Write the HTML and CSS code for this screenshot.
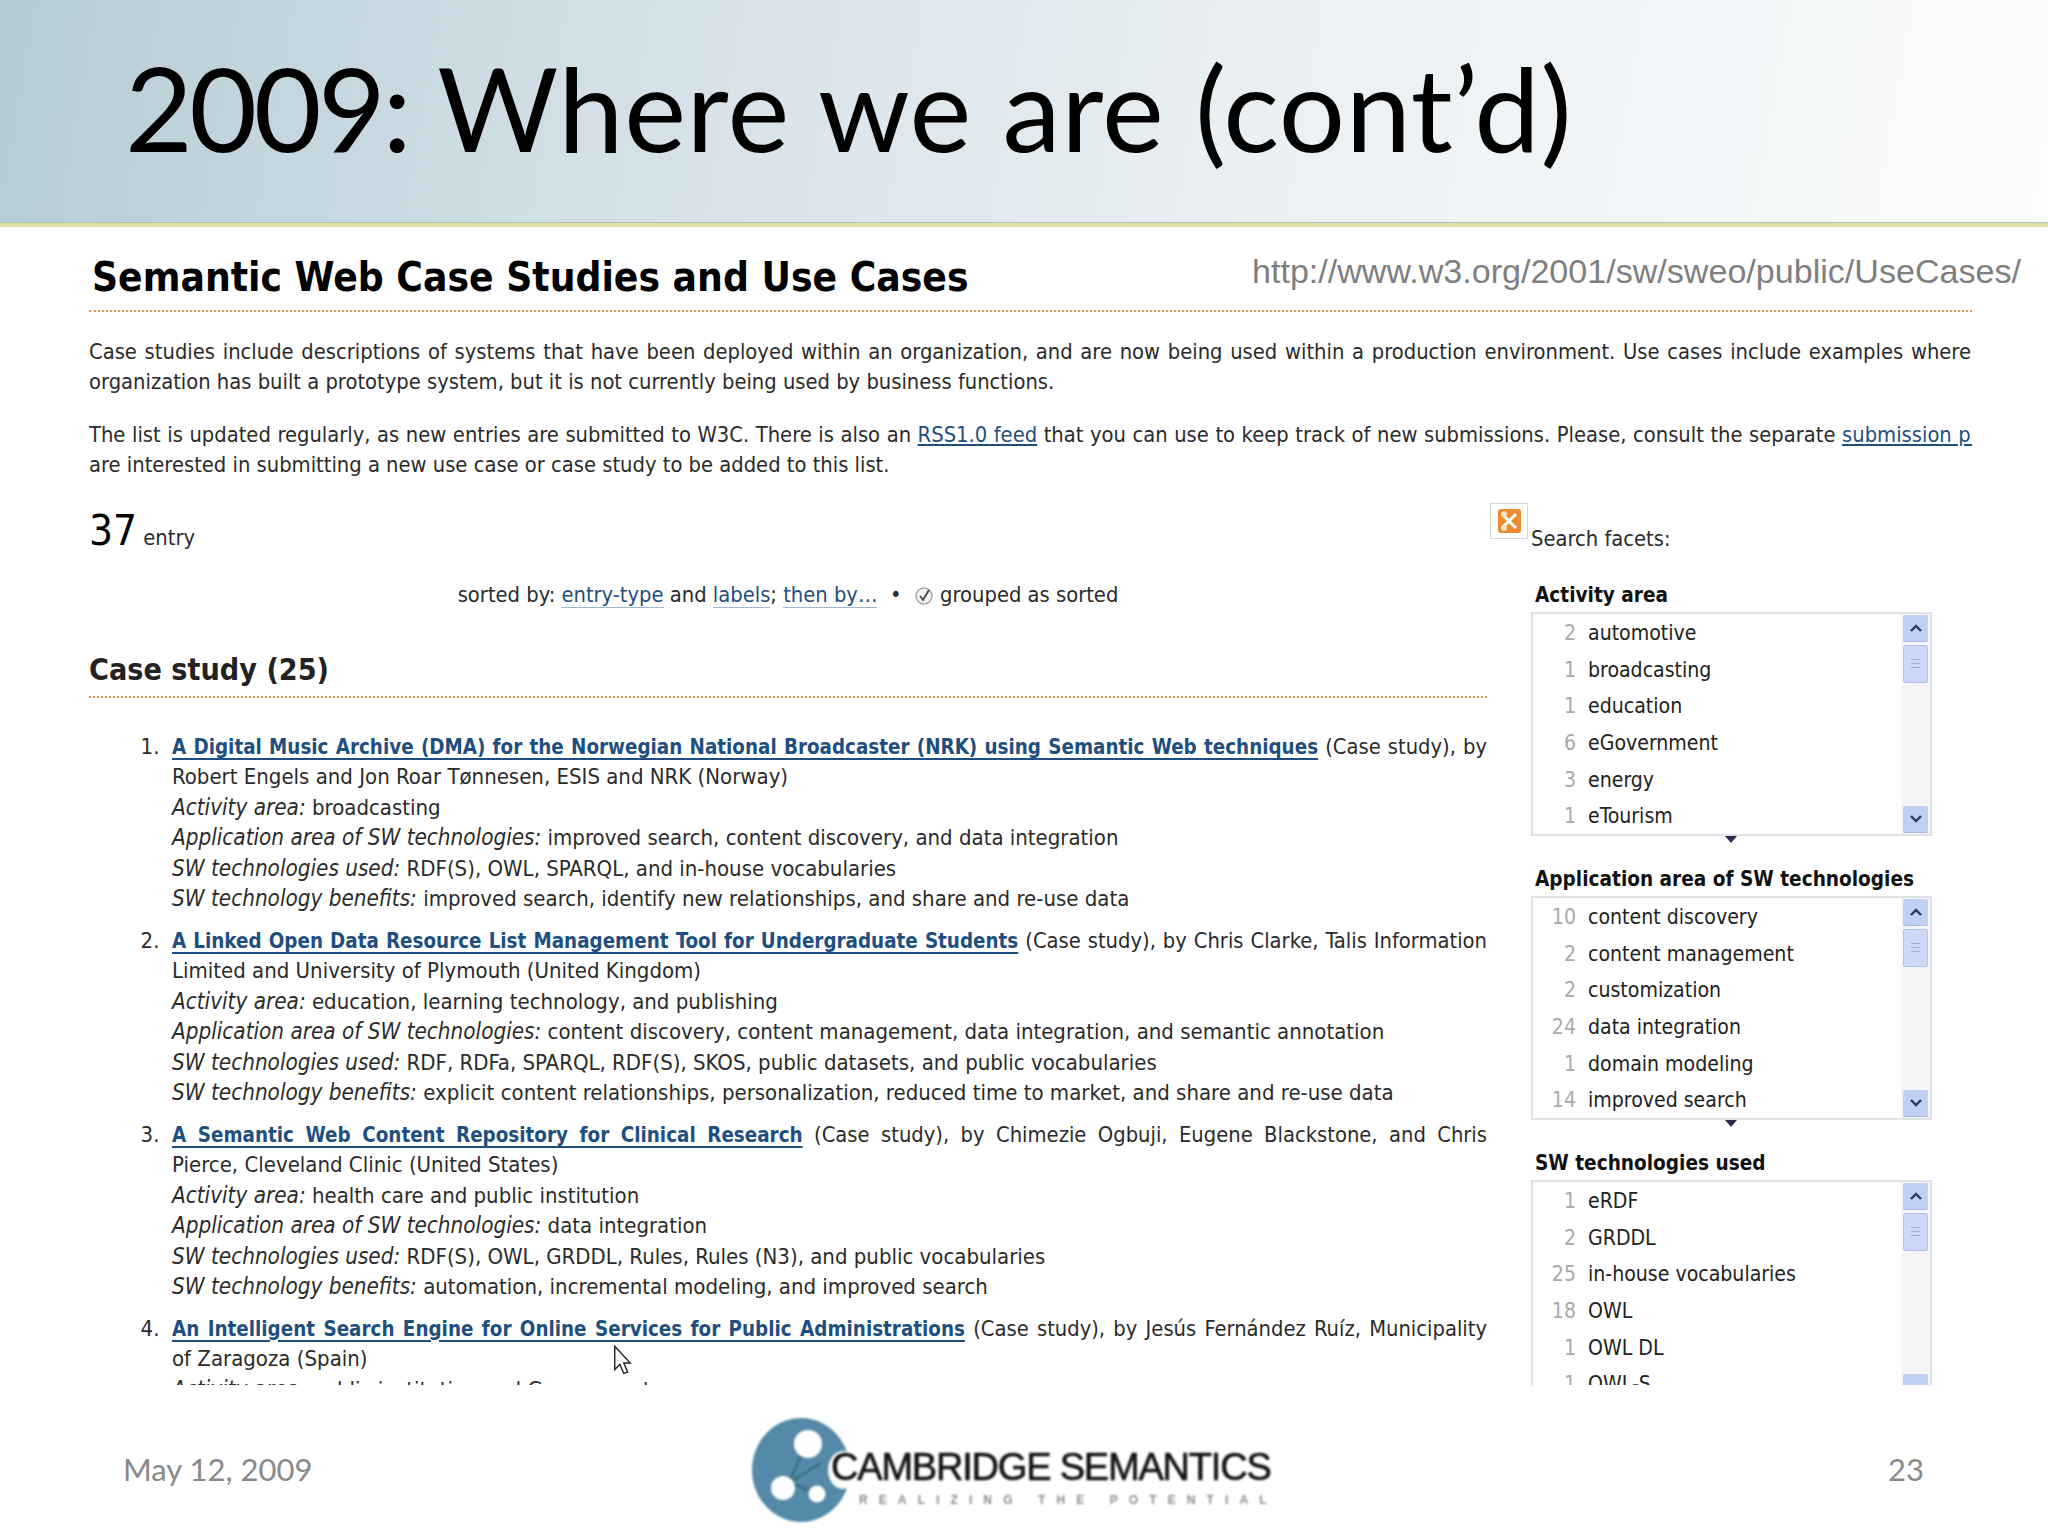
FILE: index.html
```html
<!DOCTYPE html>
<html lang="en">
<head>
<meta charset="utf-8">
<title>2009: Where we are (cont'd)</title>
<link rel="stylesheet" href="styles.css">
</head>
<body>
<div class="slide">
  <header class="title-bar"><h1 class="slide-title"><span class="title-year">2009:</span> Where we are (cont’d)</h1></header>
  <main class="page">
    <div class="url">http://www.w3.org/2001/sw/sweo/public/UseCases/</div>
    <h2 class="page-title">Semantic Web Case Studies and Use Cases</h2>
    <p class="intro intro-wide">Case studies include descriptions of systems that have been deployed within an organization, and are now being used within a production environment. Use cases include examples where an<br>organization has built a prototype system, but it is not currently being used by business functions.</p>
    <p class="intro">The list is updated regularly, as new entries are submitted to W3C. There is also an <a href="#">RSS1.0 feed</a> that you can use to keep track of new submissions. Please, consult the separate <a href="#">submission page</a> if you<br>are interested in submitting a new use case or case study to be added to this list.</p>
    <div class="columns">
      <section class="results">
        <div class="count"><span class="count-num">37</span> entry</div>
        <div class="sort">sorted by: <a class="soft" href="#">entry-type</a> and <a class="soft" href="#">labels</a>; <a class="soft" href="#">then by…</a> &nbsp;•&nbsp;
          <svg class="check" viewBox="0 0 20 20" width="20" height="20"><circle cx="10" cy="10" r="8" fill="#f2f2f2" stroke="#a8a8a8" stroke-width="1.5"/><path d="M6 10l3 4 6-10" fill="none" stroke="#444" stroke-width="1.8"/></svg>
          grouped as sorted</div>
        <h3 class="group">Case study (25)</h3>
        <ol class="items">
          <li>
            <div class="lead"><a class="item-link" href="#">A Digital Music Archive (DMA) for the Norwegian National Broadcaster (NRK) using Semantic Web techniques</a> (Case study), by</div>
            <div>Robert Engels and Jon Roar Tønnesen, ESIS and NRK (Norway)</div>
            <div><em>Activity area:</em> broadcasting</div>
            <div><em>Application area of SW technologies:</em> improved search, content discovery, and data integration</div>
            <div><em>SW technologies used:</em> RDF(S), OWL, SPARQL, and in-house vocabularies</div>
            <div><em>SW technology benefits:</em> improved search, identify new relationships, and share and re-use data</div>
          </li>
          <li>
            <div class="lead"><a class="item-link" href="#">A Linked Open Data Resource List Management Tool for Undergraduate Students</a> (Case study), by Chris Clarke, Talis Information</div>
            <div>Limited and University of Plymouth (United Kingdom)</div>
            <div><em>Activity area:</em> education, learning technology, and publishing</div>
            <div><em>Application area of SW technologies:</em> content discovery, content management, data integration, and semantic annotation</div>
            <div><em>SW technologies used:</em> RDF, RDFa, SPARQL, RDF(S), SKOS, public datasets, and public vocabularies</div>
            <div><em>SW technology benefits:</em> explicit content relationships, personalization, reduced time to market, and share and re-use data</div>
          </li>
          <li>
            <div class="lead"><a class="item-link" href="#">A Semantic Web Content Repository for Clinical Research</a> (Case study), by Chimezie Ogbuji, Eugene Blackstone, and Chris</div>
            <div>Pierce, Cleveland Clinic (United States)</div>
            <div><em>Activity area:</em> health care and public institution</div>
            <div><em>Application area of SW technologies:</em> data integration</div>
            <div><em>SW technologies used:</em> RDF(S), OWL, GRDDL, Rules, Rules (N3), and public vocabularies</div>
            <div><em>SW technology benefits:</em> automation, incremental modeling, and improved search</div>
          </li>
          <li>
            <div class="lead"><a class="item-link" href="#">An Intelligent Search Engine for Online Services for Public Administrations</a> (Case study), by Jesús Fernández Ruíz, Municipality</div>
            <div>of Zaragoza (Spain)</div>
            <div><em>Activity area:</em> public institution and Government</div>
          </li>
        </ol>
      </section>
      <aside class="facets">
        <div class="facet-head">
          <svg class="tool-icon" viewBox="0 0 38 36" width="38" height="36"><rect x=".5" y=".5" width="37" height="35" fill="#fff" stroke="#d8d8d8"/><rect x="8" y="6" width="23" height="24" rx="3" fill="#ee8a32"/><path d="M12 11l14 14M26 11L12 25" stroke="#fff" stroke-width="3"/><circle cx="14" cy="11" r="3" fill="#fde0c0"/><circle cx="14" cy="25" r="3" fill="#fde0c0"/></svg>
          <span class="facet-caption">Search facets:</span>
        </div>
        <section class="facet">
          <h4 class="facet-title">Activity area</h4>
          <div class="listbox">
            <ul class="rows">
              <li class="row"><span class="num">2</span>automotive</li>
              <li class="row"><span class="num">1</span>broadcasting</li>
              <li class="row"><span class="num">1</span>education</li>
              <li class="row"><span class="num">6</span>eGovernment</li>
              <li class="row"><span class="num">3</span>energy</li>
              <li class="row"><span class="num">1</span>eTourism</li>
            </ul>
            <div class="scrollbar">
              <div class="sb-btn"><svg viewBox="0 0 14 10" width="14" height="10"><path d="M2 8l5-5 5 5" fill="none" stroke="#2a3a60" stroke-width="2.4"/></svg></div>
              <div class="sb-thumb"><span class="grip"></span></div>
              <div class="sb-track"></div>
              <div class="sb-btn"><svg viewBox="0 0 14 10" width="14" height="10"><path d="M2 2l5 5 5-5" fill="none" stroke="#2a3a60" stroke-width="2.4"/></svg></div>
            </div>
          </div>
          <div class="resize"></div>
        </section>
        <section class="facet">
          <h4 class="facet-title">Application area of SW technologies</h4>
          <div class="listbox">
            <ul class="rows">
              <li class="row"><span class="num">10</span>content discovery</li>
              <li class="row"><span class="num">2</span>content management</li>
              <li class="row"><span class="num">2</span>customization</li>
              <li class="row"><span class="num">24</span>data integration</li>
              <li class="row"><span class="num">1</span>domain modeling</li>
              <li class="row"><span class="num">14</span>improved search</li>
            </ul>
            <div class="scrollbar">
              <div class="sb-btn"><svg viewBox="0 0 14 10" width="14" height="10"><path d="M2 8l5-5 5 5" fill="none" stroke="#2a3a60" stroke-width="2.4"/></svg></div>
              <div class="sb-thumb"><span class="grip"></span></div>
              <div class="sb-track"></div>
              <div class="sb-btn"><svg viewBox="0 0 14 10" width="14" height="10"><path d="M2 2l5 5 5-5" fill="none" stroke="#2a3a60" stroke-width="2.4"/></svg></div>
            </div>
          </div>
          <div class="resize"></div>
        </section>
        <section class="facet">
          <h4 class="facet-title">SW technologies used</h4>
          <div class="listbox">
            <ul class="rows">
              <li class="row"><span class="num">1</span>eRDF</li>
              <li class="row"><span class="num">2</span>GRDDL</li>
              <li class="row"><span class="num">25</span>in-house vocabularies</li>
              <li class="row"><span class="num">18</span>OWL</li>
              <li class="row"><span class="num">1</span>OWL DL</li>
              <li class="row"><span class="num">1</span>OWL-S</li>
            </ul>
            <div class="scrollbar">
              <div class="sb-btn"><svg viewBox="0 0 14 10" width="14" height="10"><path d="M2 8l5-5 5 5" fill="none" stroke="#2a3a60" stroke-width="2.4"/></svg></div>
              <div class="sb-thumb"><span class="grip"></span></div>
              <div class="sb-track"></div>
              <div class="sb-btn"></div>
            </div>
          </div>
        </section>
      </aside>
    </div>
    <svg class="cursor" viewBox="0 0 14 24" width="19" height="31"><path d="M1 1v18l4-4 3 7 3-1-3-7h5z" fill="#fff" stroke="#222" stroke-width="1.1"/></svg>
  </main>
  <footer class="footer">
    <span class="date">May 12, 2009</span>
    <div class="logo">
      <svg class="logo-mark" viewBox="0 0 100 106" width="100" height="106">
        <ellipse cx="50" cy="53" rx="49" ry="52" fill="#5489a8"/>
        <path d="M55 26L38 66M38 66l28 10M38 66l32-20" stroke="#3d6c8a" stroke-width="2.5" fill="none"/>
        <circle cx="57" cy="27" r="14" fill="#fff"/>
        <circle cx="32" cy="71" r="12" fill="#fff"/>
        <circle cx="66" cy="77" r="8.5" fill="#fff"/>
        <ellipse cx="92" cy="53" rx="15" ry="19" fill="#fff"/>
      </svg>
      <div class="logo-text">
        <span class="logo-name">CAMBRIDGE SEMANTICS</span>
        <span class="logo-tag">REALIZING THE POTENTIAL</span>
      </div>
    </div>
    <span class="page-num">23</span>
  </footer>
</div>
</body>
</html>
```

FILE: styles.css
```css
* { box-sizing: border-box; }
html, body { margin: 0; padding: 0; background: #fff; }
.slide {
  width: 2048px; height: 1536px; display: flex; flex-direction: column; overflow: hidden;
  font-family: "DejaVu Sans Condensed", "DejaVu Sans", sans-serif; font-stretch: condensed;
  font-size: 21.75px; line-height: 30.4px; color: #2b2b2b;
}
.title-bar {
  height: 227px; flex: none; padding-left: 125px;
  background: linear-gradient(100deg, #b5ccd5 0%, #d3e0e7 30%, #e9eff3 60%, #fbfcfc 100%);
  border-bottom: 4px solid #e2dfa2;
  box-shadow: inset 0 -1px 0 #a9c2bd;
}
.slide-title {
  margin: 0; font: 400 117px/214px "Lato", sans-serif; color: #000; white-space: nowrap; letter-spacing: .6px;
}
.title-year { letter-spacing: -3.5px; }
.page { position: relative; height: 1158px; flex: none; padding: 0 76px 0 89px; overflow: hidden; }
.url {
  position: absolute; left: 1252px; top: 24px; font: 34.1px/40px "Liberation Sans", sans-serif; color: #7f7f7f; white-space: nowrap;
}
.page-title {
  margin: 0 0 25px; padding: 25px 0 6px 3px; font-size: 40.3px; line-height: 52px; font-weight: 700; color: #000;
  border-bottom: 2px dotted #e29a4c;
}
.intro { margin: 0 0 22px; white-space: nowrap; overflow: hidden; }
.intro::first-line { word-spacing: .35px; }
.intro-wide::first-line { word-spacing: 1.5px; }
.intro a, .soft, .item-link { color: #1f4f80; }
.columns { display: flex; gap: 44px; }
.results { width: 1398px; flex: none; }
.count { height: 60px; margin-top: -2px; line-height: 60px; }
.count-num { font-size: 42px; color: #000; }
.sort { text-align: center; margin-top: 19px; }
.soft { text-decoration: none; border-bottom: 1px solid #9db8d0; }
.check { vertical-align: -4px; }
.group {
  margin: 39px 0 34px; padding-bottom: 5px; font-size: 30.2px; line-height: 42px; font-weight: 700; color: #222;
  border-bottom: 2px dotted #e29a4c;
}
.items { margin: 0; padding: 0 0 0 83px; font-size: 22px; }
.items > li { margin-bottom: 11.5px; white-space: nowrap; }
.items > li::marker { content: counter(list-item) ".\00a0\00a0"; color: #2b2b2b; }
.lead { font-size: 21.75px; text-align: justify; text-align-last: justify; white-space: normal; }
.item-link { font-size: 20.4px; font-weight: 700; font-stretch: condensed; text-decoration-thickness: 2px; text-underline-offset: 4px; }
em { font-style: italic; font-size: 22.3px; line-height: 1; }
.facets { flex: 1; min-width: 0; }
.facet-head { display: flex; align-items: flex-end; height: 36px; margin: 0 0 0 -41px; }
.tool-icon { flex: none; }
.facet-caption { margin-left: 3px; margin-bottom: -13px; line-height: 26px; }
.facet { height: 284px; position: relative; width: 401px; padding-top: 20px; }
.facet:first-of-type { margin-top: 21px; }
.facet-title { margin: 0 0 2px 4px; font-size: 20.6px; line-height: 30px; font-weight: 700; color: #111; }
.listbox { display: flex; height: 224px; border: 2px solid #dfe2e6; background: #fff; }
.rows { flex: 1; list-style: none; margin: 0; padding: 1.5px 0 0; font-size: 21.1px; }
.row { display: flex; height: 36.6px; line-height: 36.6px; color: #222; white-space: nowrap; }
.num { width: 43px; margin-right: 12px; text-align: right; color: #a9a9a9; flex: none; }
.scrollbar { flex: none; width: 29px; display: flex; flex-direction: column; background: #f5f5f5; padding: 1px 2px 1px; gap: 3px; }
.sb-btn { height: 27px; flex: none; display: flex; align-items: center; justify-content: center; background: #c2cff5; border-bottom: 1px solid #aab9e6; border-radius: 2px; }
.sb-thumb { height: 38px; flex: none; display: flex; align-items: center; justify-content: center; background: #cdd8f8; border: 1px solid #b4c3ec; border-radius: 2px; }
.grip { width: 9px; height: 9px; background: linear-gradient(#9fb0df, #9fb0df) center / 100% 1px no-repeat; border-top: 1px solid #9fb0df; border-bottom: 1px solid #9fb0df; }
.sb-track { flex: 1; }
.resize { width: 0; height: 0; margin: 0 0 0 194px; border: 6px solid transparent; border-top: 7px solid #2c2a55; }
.cursor { position: absolute; left: 613px; top: 1118px; }
.footer {
  flex: 1; display: grid; grid-template-columns: 628px 560px 1fr; padding-left: 123px; padding-right: 124px; align-items: start;
  color: #898989; font-family: "Lato", sans-serif; font-stretch: normal; font-size: 31px; line-height: 40px;
}
.date { padding-top: 64px; }
.page-num { padding-top: 64px; text-align: right; }
.logo { display: flex; padding-top: 32px; height: 151px; filter: blur(.8px); }
.logo-mark { flex: none; }
.logo-text { display: flex; flex-direction: column; margin-left: -20px; padding-top: 29px; width: 450px; font-family: "Liberation Sans", sans-serif; }
.logo-name { font-size: 38px; line-height: 42px; letter-spacing: -1.2px; color: #111; white-space: nowrap; -webkit-text-stroke: .6px #111; }
.logo-tag { margin: 5px 0 0 28px; font-size: 12px; line-height: 14px; font-weight: 700; letter-spacing: 11.1px; color: #8a8a8a; white-space: nowrap; }
```
